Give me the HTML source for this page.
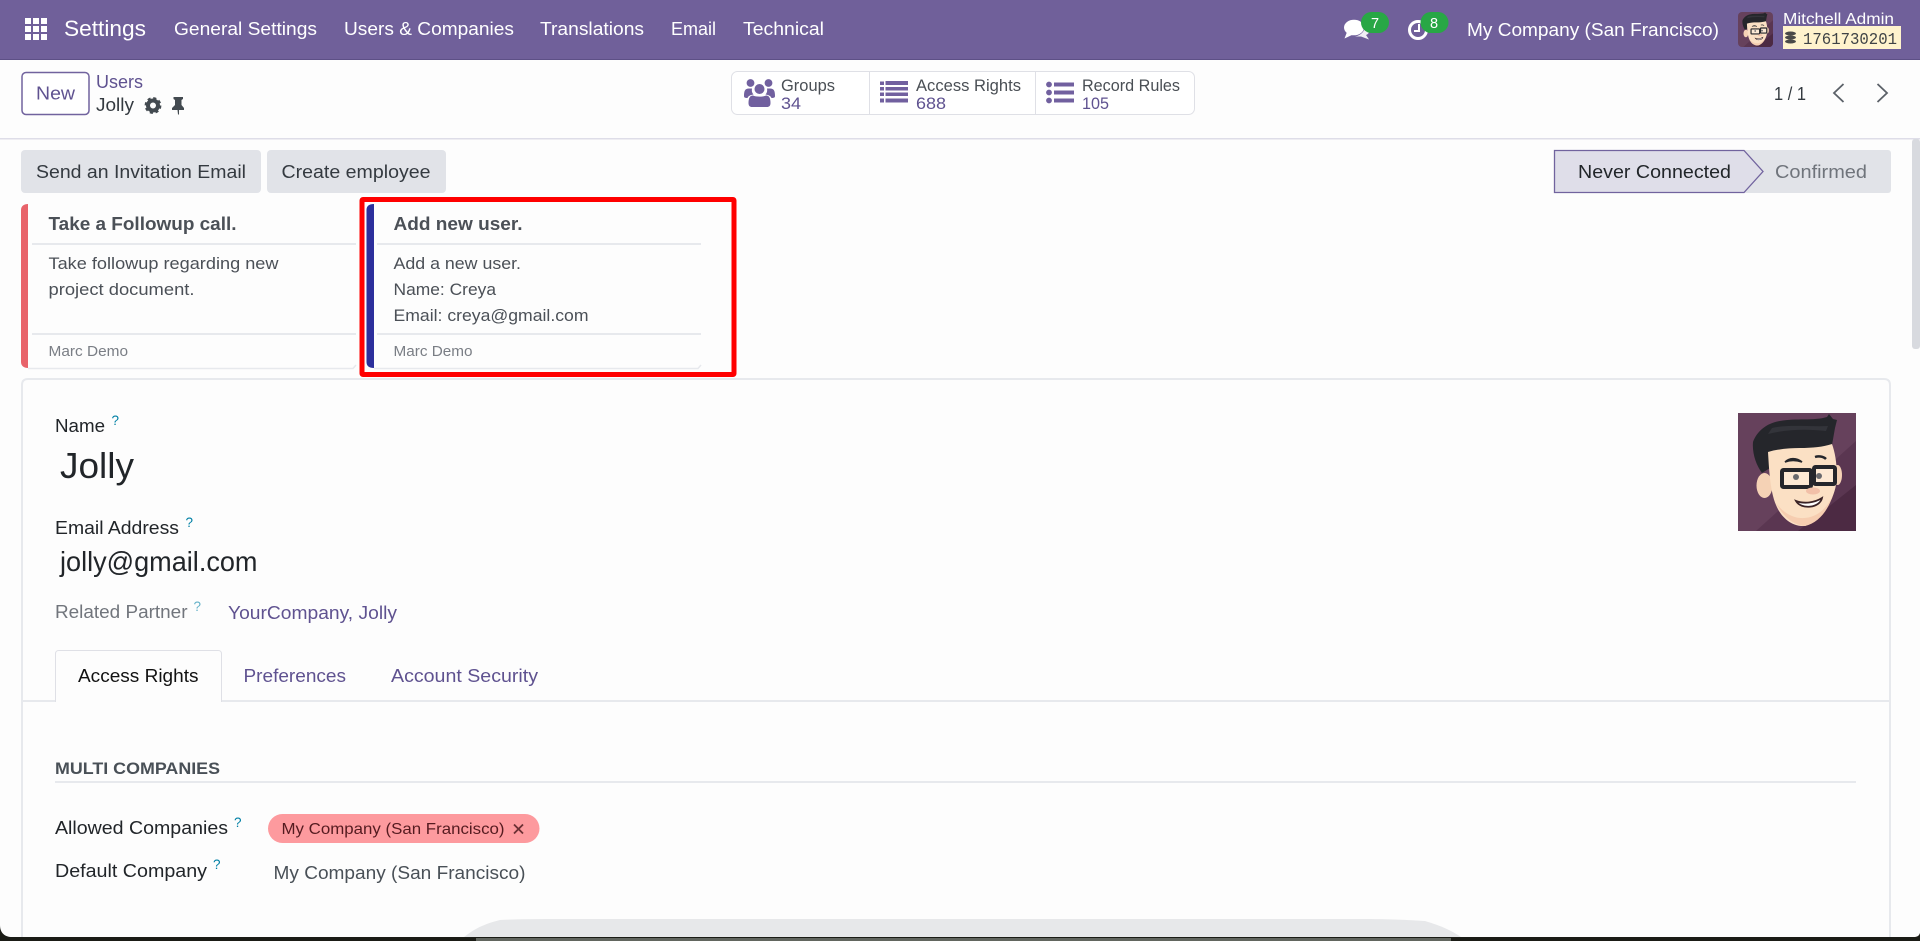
<!DOCTYPE html>
<html lang="en"><head><meta charset="utf-8"><title>Users - Jolly</title>
<style>
html,body{margin:0;padding:0;width:1920px;height:941px;overflow:hidden;background:#fdfdfd}
svg{display:block}
text{font-family:"Liberation Sans",sans-serif;font-size:18px;fill:#343a40;white-space:pre}
.n{fill:#fff;font-size:18px}
.p{fill:#5f5290}
.d{fill:#212529}
.g{fill:#7a7e85;font-size:14.8px}
.b{font-weight:bold}
.q{fill:#0180a5;font-size:13.5px}
.s{font-size:16.5px}
.c{fill:#4b5057}
</style></head><body>
<svg width="1920" height="941" viewBox="0 0 1920 941" xmlns="http://www.w3.org/2000/svg">
<defs>
<symbol id="av" viewBox="0 0 118 118">
<rect width="118" height="118" fill="#66415c"/>
<path d="M118 28V118H18Z" fill="#5a3651"/>
<path d="M118 72V118H60Z" fill="#4c2a43"/>
<path d="M15 29C19 18 29 10 42 8C58 5 76 8 89 4L91 1L95 6L99 7L97 15L94 32L96 50H33L32 55L24 60C18 52 14 40 15 29Z" fill="#25262b"/>
<path d="M34 15C50 11 72 14 90 13L88 18C70 16 50 16 30 21Z" fill="#33343a"/>
<ellipse cx="26.500" cy="72.500" rx="8" ry="12.500" fill="#f5d2b5"/>
<ellipse cx="99.500" cy="62" rx="4.500" ry="10" fill="#f5d2b5"/>
<path d="M30 39C40 36 52 35 62 35C74 35 85 34 94 31C98 42 100 58 98 72C95 88 84 108 67 113C52 114 42 102 38 92C32 78 31 55 30 39Z" fill="#fbe0c4"/>
<path d="M38 90C44 102 54 112 67 113C80 110 90 98 95 82C88 98 76 106 62 105C52 104 44 98 38 90Z" fill="#f6cdb0"/>
<path d="M47 49C51 45 58 44 64 49C58 47 52 47 47 49Z" fill="#25262b" stroke="#25262b" stroke-width="1.500"/>
<path d="M77 44C80 43 85 43 88 46" fill="none" stroke="#25262b" stroke-width="2.500"/>
<rect x="44" y="57" width="29" height="17" rx="1.500" fill="#fde9d4" stroke="#25262b" stroke-width="4"/>
<rect x="76" y="54" width="21" height="17" rx="1.500" fill="#fde9d4" stroke="#25262b" stroke-width="4"/>
<path d="M72 59L77 57" stroke="#25262b" stroke-width="4"/>
<circle cx="58" cy="64" r="3" fill="#6a6a6e"/><circle cx="81" cy="63" r="3" fill="#6a6a6e"/>
<ellipse cx="75" cy="78" rx="7" ry="3.500" fill="#f2c0a8"/>
<path d="M58 88C66 91 76 90 84 85C82 95 63 97 58 88Z" fill="#fff" stroke="#3a2326" stroke-width="1.800"/>
</symbol>
</defs>

<rect width="1920" height="941" fill="#fdfdfd"/>
<rect width="1920" height="59" fill="#70609a"/>
<rect y="59" width="1920" height="1" fill="#5d5086"/>

<!-- grid icon -->
<g fill="#fff">
<rect x="25" y="18" width="6" height="6"/><rect x="33" y="18" width="6" height="6"/><rect x="41" y="18" width="6" height="6"/>
<rect x="25" y="26" width="6" height="6"/><rect x="33" y="26" width="6" height="6"/><rect x="41" y="26" width="6" height="6"/>
<rect x="25" y="34" width="6" height="6"/><rect x="33" y="34" width="6" height="6"/><rect x="41" y="34" width="6" height="6"/>
</g>
<text x="64" y="36" class="n" style="font-size:22.5px" textLength="82" lengthAdjust="spacingAndGlyphs">Settings</text>
<text x="174" y="35" class="n" textLength="143" lengthAdjust="spacingAndGlyphs">General Settings</text>
<text x="344" y="35" class="n" textLength="170" lengthAdjust="spacingAndGlyphs">Users &amp; Companies</text>
<text x="540" y="35" class="n" textLength="104" lengthAdjust="spacingAndGlyphs">Translations</text>
<text x="671" y="35" class="n" textLength="45" lengthAdjust="spacingAndGlyphs">Email</text>
<text x="743" y="35" class="n" textLength="81" lengthAdjust="spacingAndGlyphs">Technical</text>

<!-- chat -->
<g fill="#fff">
<ellipse cx="1354" cy="27.500" rx="10" ry="7.800"/>
<path d="M1347 32L1344.500 38.500L1353 34.500Z"/>
<path d="M1365 26C1370 28 1371 33 1366 35L1369 39.500L1361 36.500L1355 36.500C1361 35.500 1365 31 1365 26Z" opacity=".9"/>
</g>
<rect x="1361" y="12" width="28" height="21" rx="10.500" fill="#28a745"/>
<text x="1375" y="28" text-anchor="middle" style="font-size:14.500px;fill:#fff">7</text>
<!-- clock -->
<circle cx="1418" cy="30" r="8.500" fill="none" stroke="#fff" stroke-width="3"/>
<path d="M1419 24V31H1414" fill="none" stroke="#fff" stroke-width="2"/>
<rect x="1420.500" y="12" width="28" height="21" rx="10.500" fill="#28a745"/>
<text x="1434" y="28" text-anchor="middle" style="font-size:14.500px;fill:#fff">8</text>
<text x="1467" y="36" class="n" textLength="252" lengthAdjust="spacingAndGlyphs">My Company (San Francisco)</text>
<svg x="1738" y="12" width="35" height="35" viewBox="0 0 35 35"><clipPath id="ac"><rect width="35" height="35" rx="4"/></clipPath><g clip-path="url(#ac)"><use href="#av" width="35" height="35"/></g></svg>
<text x="1783" y="24" class="n" style="font-size:16px" textLength="111" lengthAdjust="spacingAndGlyphs">Mitchell Admin</text>
<rect x="1783" y="26" width="118" height="23" fill="#fff3cd"/>
<g fill="#4a4a48"><ellipse cx="1790.500" cy="33.500" rx="5.500" ry="2"/><ellipse cx="1790.500" cy="37.500" rx="5.500" ry="2"/><ellipse cx="1790.500" cy="41.500" rx="5.500" ry="2"/></g>
<text x="1803" y="44" style="font-family:'Liberation Mono',monospace;font-size:16.500px;fill:#3f4346" textLength="94" lengthAdjust="spacingAndGlyphs">1761730201</text>

<!-- control panel -->
<rect x="22" y="72.500" width="67" height="42" rx="4" fill="#fff" stroke="#71639e" stroke-width="1.500"/>
<text x="36" y="99.500" class="p" textLength="39" lengthAdjust="spacingAndGlyphs">New</text>
<text x="96" y="88" class="p" textLength="47" lengthAdjust="spacingAndGlyphs">Users</text>
<text x="96" y="111" textLength="38" lengthAdjust="spacingAndGlyphs">Jolly</text>
<!-- gear -->
<circle cx="153" cy="105.500" r="5" fill="none" stroke="#434a50" stroke-width="4"/>
<circle cx="153" cy="105.500" r="7.300" fill="none" stroke="#434a50" stroke-width="2.200" stroke-dasharray="3.100 2.630"/>
<!-- pin -->
<path d="M173.500 97H183V99L181.500 100V105L184 108V110H179V114.500H178L177.500 110H172V108L175 105V100L173.500 99Z" fill="#434a50"/>

<rect x="731.500" y="71.500" width="463" height="43" rx="6" fill="#fff" stroke="#dfe0e6"/>
<path d="M869.500 72V114M1035.500 72V114" stroke="#dfe0e6"/>
<!-- users icon -->
<g fill="#71609f">
<circle cx="750.500" cy="83" r="3.900"/><circle cx="768.500" cy="83" r="3.900"/><circle cx="759.500" cy="89" r="5"/>
<path d="M744 96C744 91 745 88.500 749 88.500L752 88.500C751.500 91 752 93 753.500 94.500C750 95 748.500 96 747.500 98C745 98 744 97.500 744 96Z"/>
<path d="M775 96C775 91 774 88.500 770 88.500L767 88.500C767.500 91 767 93 765.500 94.500C769 95 770.500 96 771.500 98C774 98 775 97.500 775 96Z"/>
<path d="M748.500 103C748.500 98 750 95.500 753 95.500C756 97 763 97 766 95.500C769 95.500 770.500 98 770.500 103C770.500 106 769 107 767 107H752C750 107 748.500 106 748.500 103Z"/>
</g>
<text x="781" y="91" class="s" style="fill:#4a4f55" textLength="54" lengthAdjust="spacingAndGlyphs">Groups</text>
<text x="781" y="109" class="p s" textLength="20" lengthAdjust="spacingAndGlyphs">34</text>
<!-- list icon -->
<g fill="#71609f">
<rect x="880" y="81.500" width="4" height="3.500"/><rect x="880" y="87" width="4" height="3.500"/><rect x="880" y="92.500" width="4" height="3.500"/><rect x="880" y="98.500" width="4" height="4"/>
<rect x="885.500" y="81" width="22.500" height="4"/><rect x="885.500" y="87" width="22.500" height="3.500"/><rect x="885.500" y="92.500" width="22.500" height="3.500"/><rect x="885.500" y="98.500" width="22.500" height="4"/>
</g>
<text x="916" y="91" class="s" style="fill:#4a4f55" textLength="105" lengthAdjust="spacingAndGlyphs">Access Rights</text>
<text x="916" y="109" class="p s" textLength="30" lengthAdjust="spacingAndGlyphs">688</text>
<!-- list-ul icon -->
<g fill="#71609f">
<circle cx="1049" cy="84.500" r="2.900"/><circle cx="1049" cy="92.500" r="2.900"/><circle cx="1049" cy="100.500" r="2.900"/>
<rect x="1054" y="82.500" width="20" height="4"/><rect x="1054" y="90.500" width="20" height="4"/><rect x="1054" y="98.500" width="20" height="4"/>
</g>
<text x="1082" y="91" class="s" style="fill:#4a4f55" textLength="98" lengthAdjust="spacingAndGlyphs">Record Rules</text>
<text x="1082" y="109" class="p s" textLength="27" lengthAdjust="spacingAndGlyphs">105</text>

<text x="1774" y="100" style="font-size:18.500px" textLength="32" lengthAdjust="spacingAndGlyphs">1 / 1</text>
<path d="M1843.500 84L1834 93L1843.500 102" fill="none" stroke="#5b6168" stroke-width="1.800"/>
<path d="M1877.500 84L1887 93L1877.500 102" fill="none" stroke="#5b6168" stroke-width="1.800"/>

<rect y="138" width="1920" height="1.500" fill="#dedde8"/>
<rect x="1912" y="139" width="8" height="210" rx="3" fill="#d8dadf"/>

<!-- action buttons -->
<rect x="21" y="150" width="240" height="43" rx="4" fill="#e1e3e8"/>
<rect x="267" y="150" width="179" height="43" rx="4" fill="#e1e3e8"/>
<text x="36" y="178" textLength="210" lengthAdjust="spacingAndGlyphs">Send an Invitation Email</text>
<text x="281.500" y="178" textLength="149" lengthAdjust="spacingAndGlyphs">Create employee</text>

<!-- statusbar -->
<rect x="1554" y="150" width="337" height="43" rx="3" fill="#e1e3e8"/>
<path d="M1554.500 150.500H1744L1763 171.500L1744 192.500H1554.500Z" fill="#dfdee9" stroke="#71639e" stroke-width="1.300"/>
<text x="1578" y="178" class="d" style="font-size:18.500px" textLength="153" lengthAdjust="spacingAndGlyphs">Never Connected</text>
<text x="1775" y="178" style="fill:#6f747b;font-size:18.500px" textLength="92" lengthAdjust="spacingAndGlyphs">Confirmed</text>

<!-- card 1 -->
<path d="M28 204C24 204 21 206 21 210V362C21 366 24 368 28 368Z" fill="#e8636a"/>
<rect x="32" y="243" width="324" height="2" fill="#e7e9ed"/>
<rect x="32" y="333" width="324" height="2" fill="#e7e9ed"/>
<path d="M28 368.500H353L356 365" fill="none" stroke="#e7e9ed" stroke-width="1.500"/>
<text x="48.500" y="230" class="b c" textLength="188" lengthAdjust="spacingAndGlyphs">Take a Followup call.</text>
<text x="48.500" y="269" class="s c" textLength="230" lengthAdjust="spacingAndGlyphs">Take followup regarding new</text>
<text x="48.500" y="295" class="s c" textLength="146" lengthAdjust="spacingAndGlyphs">project document.</text>
<text x="48.500" y="356" class="g" textLength="79.500" lengthAdjust="spacingAndGlyphs">Marc Demo</text>

<!-- card 2 -->
<path d="M374 204C369 204 366.500 206 366.500 210V362C366.500 366 369 368 374 368Z" fill="#2c2f9c"/>
<rect x="377" y="243" width="324" height="2" fill="#e7e9ed"/>
<rect x="377" y="333" width="324" height="2" fill="#e7e9ed"/>
<path d="M374 368.500H698L701 365" fill="none" stroke="#e7e9ed" stroke-width="1.500"/>
<text x="393.500" y="230" class="b c" textLength="129" lengthAdjust="spacingAndGlyphs">Add new user.</text>
<text x="393.500" y="269" class="s c" textLength="127.500" lengthAdjust="spacingAndGlyphs">Add a new user.</text>
<text x="393.500" y="295" class="s c" textLength="102.500" lengthAdjust="spacingAndGlyphs">Name: Creya</text>
<text x="393.500" y="321" class="s c" textLength="195" lengthAdjust="spacingAndGlyphs">Email: creya@gmail.com</text>
<text x="393.500" y="356" class="g" textLength="79" lengthAdjust="spacingAndGlyphs">Marc Demo</text>
<rect x="362" y="199.500" width="372" height="175" rx="1" fill="none" stroke="#f00" stroke-width="5"/>

<!-- sheet -->
<path d="M22 945V385C22 381 24 379 28 379H1884C1888 379 1890 381 1890 385V945" fill="#fdfdfd" stroke="#e7e9ed" stroke-width="2"/>
<text x="55" y="432" class="d" textLength="50" lengthAdjust="spacingAndGlyphs">Name</text>
<text x="111.500" y="425" class="q">?</text>
<text x="60" y="478" class="d" style="font-size:36.500px" textLength="74" lengthAdjust="spacingAndGlyphs">Jolly</text>
<text x="55" y="534" class="d" textLength="124" lengthAdjust="spacingAndGlyphs">Email Address</text>
<text x="185.500" y="527" class="q">?</text>
<text x="60" y="571" class="d" style="font-size:27.500px" textLength="197.500" lengthAdjust="spacingAndGlyphs">jolly@gmail.com</text>
<text x="55" y="618" style="fill:#71757c" textLength="132.500" lengthAdjust="spacingAndGlyphs">Related Partner</text>
<text x="193.500" y="611" class="q" style="opacity:.6">?</text>
<text x="228" y="619" class="p" textLength="169" lengthAdjust="spacingAndGlyphs">YourCompany, Jolly</text>

<svg x="1738" y="413" width="118" height="118" viewBox="0 0 118 118"><use href="#av" width="118" height="118"/></svg>

<!-- tabs -->
<rect x="22" y="700" width="1867" height="2" fill="#e7e9ed"/>
<path d="M55.500 702V654C55.500 651 57 650.500 59 650.500H218C220 650.500 221.500 651 221.500 654V702" fill="#fdfdfd" stroke="#dfe0e6"/>
<rect x="56" y="700" width="165" height="2" fill="#fdfdfd"/>
<text x="78" y="682" style="fill:#111" textLength="120.500" lengthAdjust="spacingAndGlyphs">Access Rights</text>
<text x="243.500" y="682" class="p" textLength="102.500" lengthAdjust="spacingAndGlyphs">Preferences</text>
<text x="391" y="682" class="p" textLength="147" lengthAdjust="spacingAndGlyphs">Account Security</text>

<!-- multi companies -->
<text x="55" y="774" class="b" style="fill:#495057;font-size:17px" textLength="165" lengthAdjust="spacingAndGlyphs">MULTI COMPANIES</text>
<rect x="55" y="781" width="1801" height="2" fill="#e7e9ed"/>
<text x="55" y="834" class="d" textLength="173" lengthAdjust="spacingAndGlyphs">Allowed Companies</text>
<text x="234" y="827" class="q">?</text>
<rect x="268" y="814" width="271.500" height="29" rx="14.500" fill="#fd9a9e"/>
<text x="281.500" y="834" style="fill:#551b20;font-size:16px" textLength="223" lengthAdjust="spacingAndGlyphs">My Company (San Francisco)</text>
<path d="M514 824.500L523 833.500M523 824.500L514 833.500" stroke="#6b3034" stroke-width="1.800"/>
<text x="55" y="877" class="d" textLength="152" lengthAdjust="spacingAndGlyphs">Default Company</text>
<text x="213" y="869" class="q">?</text>
<text x="273.500" y="879" style="fill:#495057" textLength="252" lengthAdjust="spacingAndGlyphs">My Company (San Francisco)</text>

<!-- bottom edge -->
<path d="M464 937C472 931 480 925 500 920C520 919 540 919 560 919H1360C1390 919 1410 920 1425 921C1442 926 1452 931 1461 937Z" fill="#e7e8ea"/>
<rect y="937" width="1920" height="4" fill="#1b1c16"/>
<rect x="476" y="938" width="975" height="3" fill="#62665f"/>
<path d="M0 925C0 933 5 937 12 937H0Z" fill="#1b1c16"/>
<path d="M1920 933C1919 936 1917 937 1914 937H1920Z" fill="#1b1c16"/>
</svg>
</body></html>
